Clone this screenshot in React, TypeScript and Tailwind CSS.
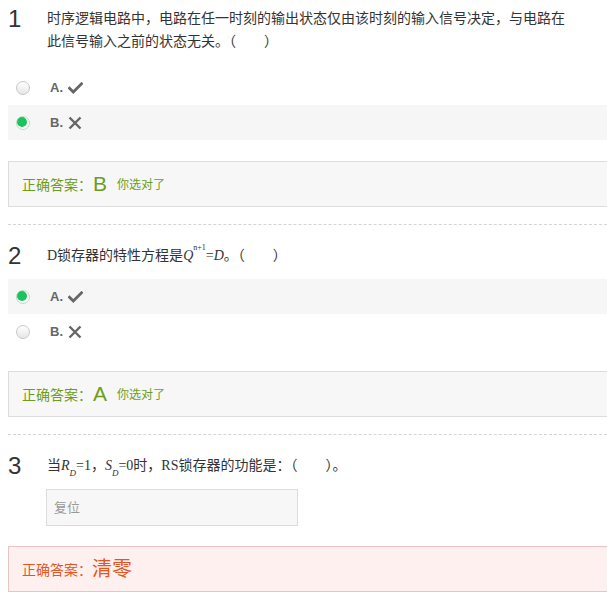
import React from "react";

const serif = { fontFamily: '"Liberation Serif", "Noto Sans CJK SC", serif' };
const sans = { fontFamily: 'Arial, "Liberation Sans", "Noto Sans CJK SC", sans-serif' };

function Radio({ checked }: { checked: boolean }) {
  return checked ? (
    <span className="inline-block w-[14px] h-[14px] rounded-full border border-[#b9dcc4] bg-white flex items-center justify-center">
      <span className="block w-[10px] h-[10px] rounded-full bg-[#1cc35c]" />
    </span>
  ) : (
    <span className="inline-block w-[14px] h-[14px] rounded-full border border-[#c8c8c8] bg-gradient-to-b from-white to-[#e6e6e6]" />
  );
}

function Check() {
  return (
    <svg width="15" height="12" viewBox="0 0 15 12">
      <path d="M1.5 6.2 L5.3 10 L13.5 1.8" fill="none" stroke="#666" strokeWidth="2.8" strokeLinecap="square" />
    </svg>
  );
}

function Cross() {
  return (
    <svg width="14" height="14" viewBox="0 0 14 14">
      <path d="M1.5 1.5 L12.5 12.5 M12.5 1.5 L1.5 12.5" fill="none" stroke="#666" strokeWidth="2.4" />
    </svg>
  );
}

function Option({ label, kind, checked, shaded }: { label: string; kind: "check" | "cross"; checked: boolean; shaded: boolean }) {
  return (
    <div className={`h-[35px] flex items-center pl-[8px] ${shaded ? "bg-[#f6f6f6]" : ""}`}>
      <Radio checked={checked} />
      <span className="ml-[20px] text-[13px] font-bold text-[#666]" style={sans}>{label}</span>
      <span className="ml-[5px] flex items-center">{kind === "check" ? <Check /> : <Cross />}</span>
    </div>
  );
}

function GreenAnswer({ letter }: { letter: string }) {
  return (
    <div className="h-[46px] w-[620px] border border-[#dcdcdc] bg-[#f7f7f7] flex items-center pl-[13px] pt-[2px]" style={sans}>
      <span className="text-[14px] text-[#6c9e1c]">正确答案：</span>
      <span className="text-[21px] text-[#6c9e1c] ml-[1px] leading-none -mt-[4px]">{letter}</span>
      <span className="text-[12px] text-[#6c9e1c] ml-[10px]">你选对了</span>
    </div>
  );
}

function Num({ n }: { n: string }) {
  return (
    <span className="w-[39px] shrink-0 text-[24px] leading-[23px] text-[#333]" style={sans}>{n}</span>
  );
}

export default function App() {
  return (
    <div className="w-[607px] h-[602px] overflow-hidden bg-white pl-[8px]">
      {/* Q1 */}
      <div className="flex pt-[7px]">
        <Num n="1" />
        <div className="text-[14px] leading-[23px] text-[#333] w-[520px]" style={serif}>
          时序逻辑电路中，电路在任一时刻的输出状态仅由该时刻的输入信号决定，与电路在此信号输入之前的状态无关。（　　）
        </div>
      </div>
      <div className="mt-[17px]">
        <Option label="A." kind="check" checked={false} shaded={false} />
        <Option label="B." kind="cross" checked={true} shaded={true} />
      </div>
      <div className="mt-[21px]">
        <GreenAnswer letter="B" />
      </div>
      <div className="mt-[17px] border-t border-dashed border-[#d4d4d4]" />

      {/* Q2 */}
      <div className="flex pt-[19px]">
        <Num n="2" />
        <div className="text-[14px] leading-[23px] text-[#333]" style={serif}>
          D锁存器的特性方程是<i>Q</i><sup className="text-[8px] align-[6px]">n+1</sup>=<i>D</i>。（　　）
        </div>
      </div>
      <div className="mt-[12px]">
        <Option label="A." kind="check" checked={true} shaded={true} />
        <Option label="B." kind="cross" checked={false} shaded={false} />
      </div>
      <div className="mt-[22px]">
        <GreenAnswer letter="A" />
      </div>
      <div className="mt-[17px] border-t border-dashed border-[#d4d4d4]" />

      {/* Q3 */}
      <div className="flex pt-[19px]">
        <Num n="3" />
        <div className="text-[14px] leading-[23px] text-[#333]" style={serif}>
          当<i>R</i><sub className="text-[9px] align-[-4px]"><i>D</i></sub>=1，<i>S</i><sub className="text-[9px] align-[-4px]"><i>D</i></sub>=0时，RS锁存器的功能是：（　　）。
        </div>
      </div>
      <div className="mt-[12px] ml-[38px] w-[252px] h-[37px] border border-[#dcdcdc] bg-[#f7f7f7] flex items-center pl-[7px]">
        <span className="text-[13px] text-[#999]" style={sans}>复位</span>
      </div>
      <div className="mt-[20px] h-[46px] w-[620px] border border-[#eac4c4] bg-[#fff0f0] flex items-center pl-[13px] pt-[2px]" style={sans}>
        <span className="text-[14px] text-[#e2571f]">正确答案：</span>
        <span className="text-[20px] text-[#e2571f] -mt-[3px]">清零</span>
      </div>
    </div>
  );
}
